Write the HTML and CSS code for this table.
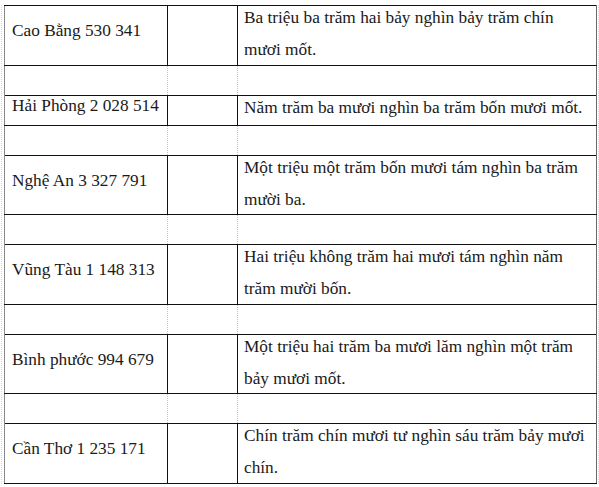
FILE: index.html
```html
<!DOCTYPE html>
<html lang="vi">
<head>
<meta charset="utf-8">
<link rel="stylesheet" href="styles.css">
</head>
<body>
<div class="frame">
<table class="grid">
  <colgroup><col class="c1"><col class="c2"><col class="c3"></colgroup>
  <tr class="row two"><td class="name">Cao Bằng 530 341</td><td class="mid"></td><td class="words"><div class="txt">Ba triệu ba trăm hai bảy nghìn bảy trăm chín mươi mốt.</div></td></tr>
  <tr class="gap"><td></td><td></td><td></td></tr>
  <tr class="row one"><td class="name">Hải Phòng 2 028 514</td><td class="mid"></td><td class="words"><div class="txt">Năm trăm ba mươi nghìn ba trăm bốn mươi mốt.</div></td></tr>
  <tr class="gap"><td></td><td></td><td></td></tr>
  <tr class="row two"><td class="name">Nghệ An 3 327 791</td><td class="mid"></td><td class="words"><div class="txt">Một triệu một trăm bốn mươi tám nghìn ba trăm mười ba.</div></td></tr>
  <tr class="gap"><td></td><td></td><td></td></tr>
  <tr class="row two"><td class="name">Vũng Tàu 1 148 313</td><td class="mid"></td><td class="words"><div class="txt">Hai triệu không trăm hai mươi tám nghìn năm trăm mười bốn.</div></td></tr>
  <tr class="gap"><td></td><td></td><td></td></tr>
  <tr class="row two"><td class="name">Bình phước 994 679</td><td class="mid"></td><td class="words"><div class="txt">Một triệu hai trăm ba mươi lăm nghìn một trăm bảy mươi mốt.</div></td></tr>
  <tr class="gap"><td></td><td></td><td></td></tr>
  <tr class="row two"><td class="name">Cần Thơ 1 235 171</td><td class="mid"></td><td class="words"><div class="txt">Chín trăm chín mươi tư nghìn sáu trăm bảy mươi chín.</div></td></tr>
</table>
</div>
</body>
</html>
```
FILE: styles.css
```css
html, body {
  margin: 0;
  padding: 0;
  background: #ffffff;
}
.frame {
  display: inline-block;
  margin: 5px 0 0 1px;
  padding: 0 1px 0 2px;
  border-left: 1px dotted #d4d4d4;
  border-right: 1px dotted #d4d4d4;
}
.grid {
  border-collapse: collapse;
  table-layout: fixed;
  width: 592px;
  font-family: "Liberation Serif", "Times New Roman", serif;
  font-size: 17.3px;
  color: #1a1a1a;
}
.c1 { width: 163px; }
.c2 { width: 70px; }
.c3 { width: 359px; }
.grid td {
  border: 1px dotted #c4c4c4;
  padding: 0;
  vertical-align: middle;
}
.grid td:first-child { border-left: 1px solid #8a8a8a; }
.grid td:last-child { border-right: 1px solid #6a6a6a; }
.row td {
  border-top: 1px solid #111111;
  border-bottom: 1px solid #111111;
}
.row td.name {
  padding: 0 0 8px 7px;
  border-right: 1px solid #111111;
}
.row td.words {
  padding: 0 8px 0 6px;
  border-left: 1px solid #111111;
  vertical-align: top;
}
.txt {
  line-height: 32px;
  margin: -4px 0 -7px;
}
.two { height: 59.5px; }
.one { height: 30px; }
.gap { height: 30px; }
```
